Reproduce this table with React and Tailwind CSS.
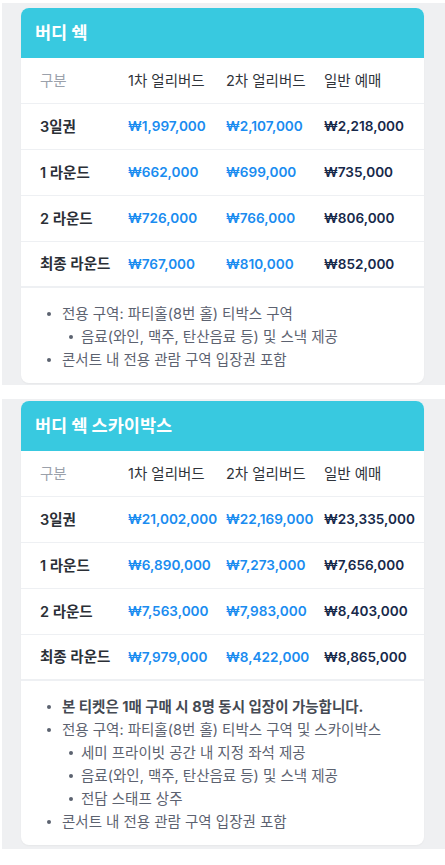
const FONT = { fontFamily: 'Inter, "Noto Sans CJK KR", sans-serif' };

const cards = [
  {
    title: '버디 쉑',
    rows: [
      ['3일권', '₩1,997,000', '₩2,107,000', '₩2,218,000'],
      ['1 라운드', '₩662,000', '₩699,000', '₩735,000'],
      ['2 라운드', '₩726,000', '₩766,000', '₩806,000'],
      ['최종 라운드', '₩767,000', '₩810,000', '₩852,000'],
    ],
    notes: [
      { text: '전용 구역: 파티홀(8번 홀) 티박스 구역', sub: ['음료(와인, 맥주, 탄산음료 등) 및 스낵 제공'] },
      { text: '콘서트 내 전용 관람 구역 입장권 포함' },
    ],
    pad: 'pt-[5px] pb-[2px] mt-[3px]',
  },
  {
    title: '버디 쉑 스카이박스',
    rows: [
      ['3일권', '₩21,002,000', '₩22,169,000', '₩23,335,000'],
      ['1 라운드', '₩6,890,000', '₩7,273,000', '₩7,656,000'],
      ['2 라운드', '₩7,563,000', '₩7,983,000', '₩8,403,000'],
      ['최종 라운드', '₩7,979,000', '₩8,422,000', '₩8,865,000'],
    ],
    notes: [
      { text: '본 티켓은 1매 구매 시 8명 동시 입장이 가능합니다.', bold: true },
      {
        text: '전용 구역: 파티홀(8번 홀) 티박스 구역 및 스카이박스',
        sub: ['세미 프라이빗 공간 내 지정 좌석 제공', '음료(와인, 맥주, 탄산음료 등) 및 스낵 제공', '전담 스태프 상주'],
      },
      { text: '콘서트 내 전용 관람 구역 입장권 포함' },
    ],
    pad: 'pt-[2px] pb-[4px] mt-[14px]',
  },
];

function Bullet({ children, bold, nested }) {
  return (
    <li className={`flex items-start leading-[23px] ${nested ? 'pl-[48px]' : 'pl-[26px]'}`}>
      <span className={`${nested ? 'w-[12px]' : 'w-[15px]'} shrink-0 flex justify-start pt-[10px]`}>
        <span className="block w-[4px] h-[4px] rounded-full bg-[#5c6270]" />
      </span>
      <span className={bold ? 'font-bold text-[#454a53]' : 'text-[#5c6270]'}>{children}</span>
    </li>
  );
}

function PriceCard({ card }) {
  return (
    <section className={`ml-[2px] bg-[#eff0f2] pl-[19px] pr-[21px] ${card.pad}`}>
      <div className="bg-white rounded-lg overflow-hidden shadow-[0_1px_2px_rgba(0,0,0,0.04)]">
        <div className="h-[50px] bg-[#38c9e0] flex items-center px-[14px]">
          <h2 className="text-[17.5px] font-bold text-white">{card.title}</h2>
        </div>
        <div className="grid grid-cols-[88px_98px_98px_1fr] pl-[19px] h-[46px] items-center border-b border-[#eef0f3] text-[14.5px]">
          <span className="text-[#9ba1ab]">구분</span>
          <span className="text-[#30343b]">1차 얼리버드</span>
          <span className="text-[#30343b]">2차 얼리버드</span>
          <span className="text-[#30343b]">일반 예매</span>
        </div>
        {card.rows.map((r, i) => (
          <div
            key={r[0]}
            className={`grid grid-cols-[88px_98px_98px_1fr] pl-[19px] h-[46px] items-center border-[#eef0f3] ${
              i === card.rows.length - 1 ? 'border-b-2' : 'border-b'
            }`}
          >
            <span className="text-[14.5px] font-semibold text-[#2b2f36]">{r[0]}</span>
            <span className="text-[13.6px] font-semibold text-[#1a8cf0]">{r[1]}</span>
            <span className="text-[13.6px] font-semibold text-[#1a8cf0]">{r[2]}</span>
            <span className="text-[13.6px] font-semibold text-[#17294a]">{r[3]}</span>
          </div>
        ))}
        <ul className="pt-[14px] pb-[12px] text-[14.5px]">
          {card.notes.map((n) => (
            <div key={n.text}>
              <Bullet bold={n.bold}>{n.text}</Bullet>
              {n.sub?.map((s) => (
                <Bullet key={s} nested>
                  {s}
                </Bullet>
              ))}
            </div>
          ))}
        </ul>
      </div>
    </section>
  );
}

export default function App() {
  return (
    <div className="w-[445px] min-h-[865px] bg-white" style={FONT}>
      {cards.map((c) => (
        <PriceCard key={c.title} card={c} />
      ))}
    </div>
  );
}
